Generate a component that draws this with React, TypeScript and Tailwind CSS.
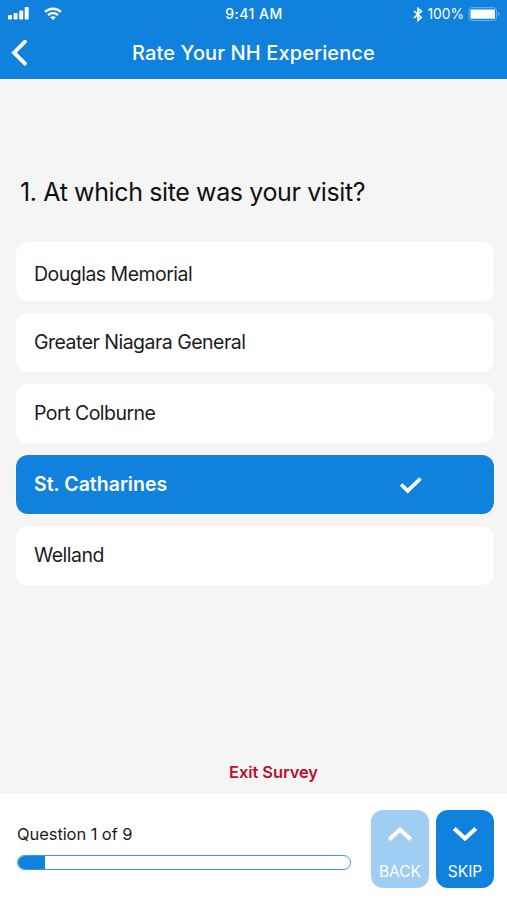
import clsx from "clsx";

interface Site {
  id: number;
  name: string;
}

const sites: Site[] = [
  { id: 1, name: "Douglas Memorial" },
  { id: 2, name: "Greater Niagara General" },
  { id: 3, name: "Port Colburne" },
  { id: 4, name: "St. Catharines" },
  { id: 5, name: "Welland" },
];

const selectedId = 4;

const StatusBar = () => (
  <div className="grid h-7 grid-cols-3 items-center pl-2 pr-[7px]">
    <div className="flex items-center gap-[15px]">
      <svg width="21" height="14" viewBox="0 0 21 14" fill="currentColor">
        <rect x="0" y="8" width="4" height="4.5" rx="1" />
        <rect x="5.6" y="6" width="4" height="6.5" rx="1" />
        <rect x="11.2" y="3.5" width="4" height="9" rx="1" />
        <rect x="16.7" y="0" width="4" height="12.5" rx="1" />
      </svg>
      <svg width="18" height="14" viewBox="0 0 18 14" fill="none" stroke="currentColor" strokeWidth="2.4">
        <path d="M1 4.9C5.5 .6 12.5 .6 17 4.9" />
        <path d="M4 8.2C6.8 5.4 11.2 5.4 14 8.2" />
        <path d="M6.1 10.2C7.8 8.8 10.2 8.8 11.9 10.2L9 13Z" fill="currentColor" stroke="none" />
      </svg>
    </div>
    <span className="text-center text-[14px] leading-7 font-medium tracking-[0.5px]">9:41 AM</span>
    <div className="flex items-center justify-end">
      <svg width="10" height="15" viewBox="0 0 10 15" fill="none" stroke="currentColor" strokeWidth="1.6">
        <path d="M1 4L8.3 10.5L5 13.4V1.4L8.3 4.3L1 10.8" />
      </svg>
      <span className="ml-1 text-[13.8px] leading-7">100%</span>
      <svg className="ml-1" width="32" height="14" viewBox="0 0 32 14">
        <rect x="1" y="0.7" width="27.5" height="12.8" rx="3" fill="none" stroke="#6fb3ec" />
        <rect x="2.5" y="2.5" width="24.5" height="9.3" rx="1" fill="#fff" />
        <path d="M30 5V9C31.8 8.5 31.8 5.5 30 5Z" fill="#6fb3ec" />
      </svg>
    </div>
  </div>
);

const Header = () => (
  <header className="h-[79px] bg-[#1082de] text-white">
    <StatusBar />
    <div className="grid h-[49px] grid-cols-[40px_1fr_40px] items-center">
      <svg width="40" height="32" viewBox="0 0 40 32" fill="none" stroke="currentColor" strokeWidth="3.8" strokeLinecap="round">
        <path d="M25 4.7L14 15.7L25 26.7" />
      </svg>
      <h1 className="text-center text-[20px] font-medium tracking-[0.12px] whitespace-nowrap">Rate Your NH Experience</h1>
    </div>
  </header>
);

const SiteOption = ({ site, selected }: { site: Site; selected: boolean }) => (
  <button
    className={clsx(
      "flex h-[59px] w-full items-center justify-between rounded-xl pl-[18px] pr-[71px] text-left text-[19.5px]",
      selected
        ? "bg-[#1082de] font-semibold text-white"
        : "bg-white tracking-[-0.52px] text-[#1c1c1c]",
      site.id === 1 && "pt-1.5"
    )}
  >
    {site.name}
    {selected && (
      <svg width="24" height="18" viewBox="0 0 24 18" fill="none" stroke="currentColor" strokeWidth="3.8">
        <path d="M2.2 8.5L8.7 14.8L21.5 2.5" />
      </svg>
    )}
  </button>
);

const NavButton = ({ label, up }: { label: string; up?: boolean }) => (
  <button
    className={clsx(
      "flex h-[78px] w-[58px] flex-col items-center rounded-xl pt-4 text-white",
      up ? "bg-[#a0cdf2]" : "bg-[#1082de]"
    )}
  >
    <svg width="26" height="16" viewBox="0 0 26 16" fill="none" stroke="currentColor" strokeWidth="4.2">
      <path d={up ? "M2.2 13.5L13 3.5L23.8 13.5" : "M2.2 2.5L13 12.5L23.8 2.5"} />
    </svg>
    <span className="mt-5 text-[15.5px] leading-5">{label}</span>
  </button>
);

const App = () => {
  return (
    <div className="flex h-[900px] w-[507px] flex-col overflow-hidden bg-[#f5f5f5] font-['Inter',sans-serif]">
      <Header />
      <main className="flex flex-1 flex-col pl-4 pr-[13px]">
        <h2 className="mt-[97px] pl-1 text-[25px] leading-8 tracking-[-0.38px] whitespace-nowrap text-[#111]">
          1. At which site was your visit?
        </h2>
        <div className="mt-[34px] flex flex-col gap-3">
          {sites.map((site) => (
            <SiteOption key={site.id} site={site} selected={site.id === selectedId} />
          ))}
        </div>
        <button className="mt-auto mb-[10px] ml-[213px] w-fit text-[16.5px] leading-6 font-semibold tracking-[-0.08px] text-[#b5122e]">
          Exit Survey
        </button>
      </main>
      <footer className="flex h-[106px] justify-between bg-white pt-4 pr-[13px] pl-[17px]">
        <div className="w-[334px]">
          <p className="mt-3 text-[16.5px] leading-6 tracking-[-0.08px] text-[#1c1c1c]">Question 1 of 9</p>
          <div className="mt-[9px] h-[15px] overflow-hidden rounded-full border border-[#3a98e3]">
            <div className="h-full w-[27px] bg-[#1082de]" />
          </div>
        </div>
        <div className="flex gap-[7px]">
          <NavButton label="BACK" up />
          <NavButton label="SKIP" />
        </div>
      </footer>
    </div>
  );
};

export default App;
